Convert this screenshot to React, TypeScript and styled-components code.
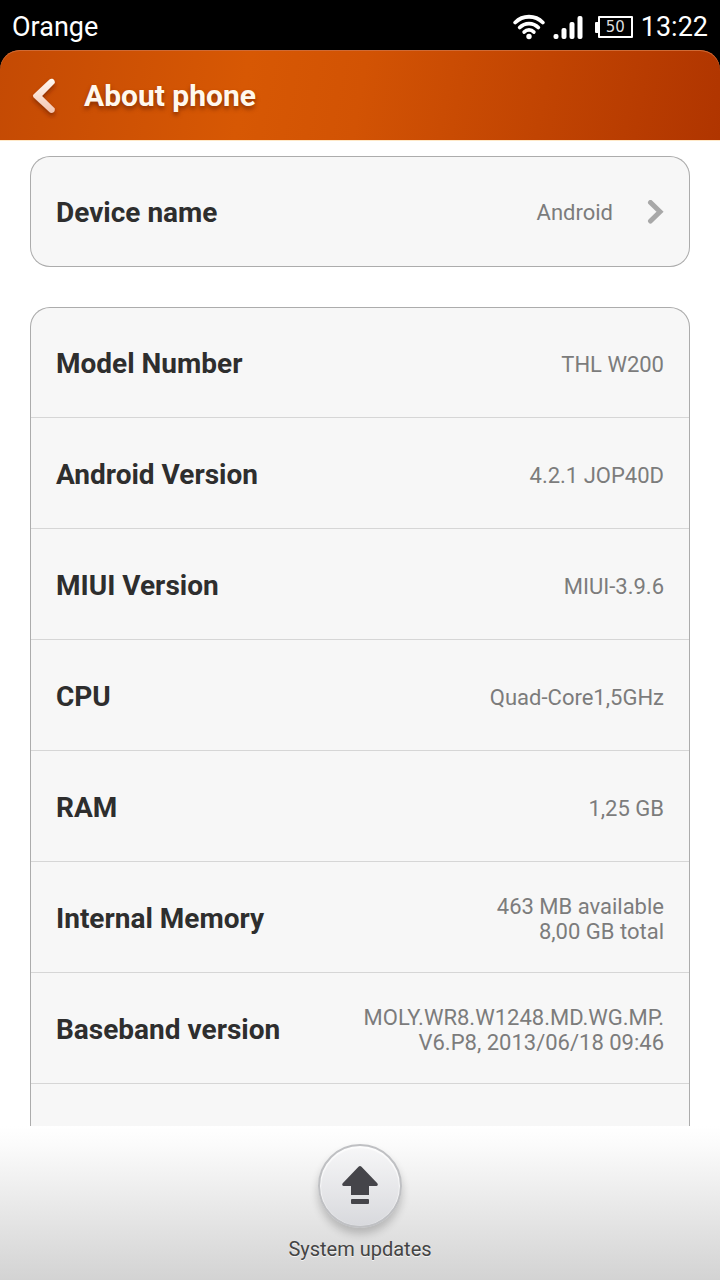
import React from "react";
import styled, { createGlobalStyle } from "styled-components";

const GlobalStyle = createGlobalStyle`
  *, *::before, *::after { box-sizing: border-box; }
  body {
    margin: 0;
    background: #000;
    font-family: Roboto, "Liberation Sans", sans-serif;
  }
`;

const Screen = styled.div`
  display: flex;
  flex-direction: column;
  height: 100vh;
  overflow: hidden;
  background: #000;
`;

const StatusBar = styled.div`
  display: flex;
  flex: none;
  align-items: center;
  justify-content: space-between;
  height: 50px;
  padding: 4px 12px 0;
  color: #fff;
  font-size: 27px;
  line-height: 32px;
`;

const StatusIcons = styled.div`
  display: flex;
  align-items: center;
  gap: 8px;

  svg { display: block; }
`;

const Header = styled.header`
  display: flex;
  flex: none;
  align-items: center;
  gap: 12px;
  height: 90px;
  padding: 2px 18px 0;
  border-radius: 20px 20px 0 0;
  background: linear-gradient(100deg, #c44a04 0%, #d75804 34%, #d25304 50%, #b03500 100%);
  box-shadow: inset 0 1px 0 #cf6a35;
`;

const BackButton = styled.button`
  display: grid;
  place-items: center;
  width: 54px;
  height: 64px;
  padding: 0;
  border: 0;
  background: none;
  cursor: pointer;
`;

const Title = styled.h1`
  margin: 0;
  color: #fff8ee;
  font-size: 30px;
  font-weight: 700;
  line-height: 36px;
  text-shadow: 0 3px 4px rgba(90, 25, 0, 0.6);
`;

const Content = styled.main`
  display: flex;
  flex: 1;
  flex-direction: column;
  gap: 40px;
  min-height: 0;
  padding: 16px 30px 0;
  overflow-y: auto;
  scrollbar-width: none;
  background: #fff;
  box-shadow: inset 0 1px 0 #ffe9c8;
`;

const Card = styled.dl`
  flex: none;
  margin: 0;
  padding: 0 1px;
  border-radius: 20px;
  background: #f7f7f7;
  box-shadow: inset 0 0 0 1px #acacac;
`;

const rowLayout = `
  display: flex;
  align-items: center;
  justify-content: space-between;
  gap: 16px;
  width: 100%;
  height: 111px;
`;

const Row = styled.div`
  ${rowLayout}
  padding: 4px 25px 0;
  border-bottom: 1px solid #d6d6d6;

  &:last-child { border-bottom: 0; }
`;

const CardButton = styled.button`
  ${rowLayout}
  flex: none;
  padding: 2px 26px 0;
  border: 0;
  border-radius: 20px;
  background: #f7f7f7;
  box-shadow: inset 0 0 0 1px #acacac;
  font-family: inherit;
  text-align: left;
  cursor: pointer;
`;

const Label = styled.span`
  color: #2e2e2e;
  font-size: 28px;
  font-weight: 700;
  line-height: 36px;
`;

const Value = styled.span`
  margin: 0;
  color: #7c7c7c;
  font-size: 22px;
  line-height: 25px;
  text-align: right;
  white-space: pre-line;
`;

const Linked = styled.span`
  display: flex;
  align-items: center;
  gap: 33px;
`;

const BottomBar = styled.footer`
  display: flex;
  flex: none;
  justify-content: center;
  height: 154px;
  padding-top: 18px;
  background: linear-gradient(#fff 0%, #fbfbfb 12%, #d3d3d3 100%);
`;

const UpdateButton = styled.button`
  display: flex;
  flex-direction: column;
  align-items: center;
  gap: 8px;
  padding: 0;
  border: 0;
  background: none;
  color: #444;
  font-family: inherit;
  font-size: 20px;
  line-height: 26px;
  text-shadow: 0 1px 0 #f4f4f4;
  cursor: pointer;
`;

const RoundIcon = styled.span`
  display: grid;
  place-items: center;
  width: 84px;
  height: 84px;
  padding-bottom: 2px;
  border: 2px solid #bfc0c3;
  border-radius: 50%;
  background: linear-gradient(#f7f7f8, #d8d9dd);
  box-shadow: inset 0 1px 1px 1px rgba(255, 255, 255, 0.7), 0 6px 8px rgba(0, 0, 0, 0.2);
`;

const details = [
  { label: "Model Number", value: "THL W200" },
  { label: "Android Version", value: "4.2.1 JOP40D" },
  { label: "MIUI Version", value: "MIUI-3.9.6" },
  { label: "CPU", value: "Quad-Core1,5GHz" },
  { label: "RAM", value: "1,25 GB" },
  { label: "Internal Memory", value: "463 MB available\n8,00 GB total" },
  { label: "Baseband version", value: "MOLY.WR8.W1248.MD.WG.MP.\nV6.P8, 2013/06/18 09:46" },
];

const WifiIcon = () => (
  <svg width="32" height="26" viewBox="0 0 32 26" fill="none" stroke="#fff" strokeWidth="3.8" strokeLinecap="round" aria-hidden="true">
    <path d="M2.200 8.500C9.800 0.800 22.200 0.800 29.800 8.500" />
    <path d="M6.700 13.500C11.800 8.200 20.200 8.200 25.300 13.500" />
    <path d="M11.200 18C13.800 15.200 18.200 15.200 20.800 18" />
    <circle cx="16" cy="22.500" r="2.700" fill="#fff" stroke="none" />
  </svg>
);

const SignalIcon = () => (
  <svg width="30" height="26" viewBox="0 0 30 26" fill="#fff" aria-hidden="true">
    <rect x="0.500" y="20" width="5" height="5" rx="2" />
    <rect x="8.500" y="14" width="5" height="11" rx="2" />
    <rect x="16.500" y="8" width="5" height="17" rx="2" />
    <rect x="24.500" y="2" width="5" height="23" rx="2" />
  </svg>
);

const Battery = styled.span`
  display: flex;
  align-items: center;
  margin-left: 4px;

  &::before {
    content: "";
    width: 3px;
    height: 11px;
    border-radius: 1px 0 0 1px;
    background: #fff;
  }
`;

const BatteryLevel = styled.span`
  display: grid;
  place-items: center;
  width: 35px;
  height: 22px;
  border: 2px solid #fff;
  border-radius: 1px;
  color: #ddd;
  font-family: "DejaVu Sans", sans-serif;
  font-size: 15px;
  line-height: 18px;
`;

export default function App() {
  return (
    <Screen>
      <GlobalStyle />
      <StatusBar>
        <span>Orange</span>
        <StatusIcons>
          <WifiIcon />
          <SignalIcon />
          <Battery>
            <BatteryLevel>50</BatteryLevel>
          </Battery>
          <span>13:22</span>
        </StatusIcons>
      </StatusBar>
      <Header>
        <BackButton type="button" aria-label="Back">
          <svg width="34" height="46" viewBox="0 0 34 46" fill="none" aria-hidden="true">
            <defs>
              <linearGradient id="backFill" x1="0" y1="5" x2="0" y2="41" gradientUnits="userSpaceOnUse">
                <stop stopColor="#fffaf4" />
                <stop offset="1" stopColor="#f3c3ae" />
              </linearGradient>
              <filter id="backShadow" x="-30%" y="-30%" width="160%" height="160%">
                <feDropShadow dx="0" dy="3" stdDeviation="2" floodColor="#6b2000" floodOpacity="0.6" />
              </filter>
            </defs>
            <path
              d="M5.500 21.600 21.500 6.500C24 4.300 27.400 6.700 26.800 10L14 22.900 26.800 35.500C27.400 39 24 41.200 21.500 39L5.500 24.200Q4.300 22.900 5.500 21.600Z"
              fill="url(#backFill)"
              filter="url(#backShadow)"
            />
          </svg>
        </BackButton>
        <Title>About phone</Title>
      </Header>
      <Content>
        <CardButton type="button">
          <Label>Device name</Label>
          <Linked>
            <Value>Android</Value>
            <svg width="18" height="26" viewBox="0 0 18 26" fill="none" stroke="#a8a8a8" strokeWidth="5" strokeLinecap="round" aria-hidden="true">
              <path d="M4.500 2.500 14 11.800 4.500 21" />
            </svg>
          </Linked>
        </CardButton>
        <Card>
          {details.map(({ label, value }) => (
            <Row key={label}>
              <Label as="dt">{label}</Label>
              <Value as="dd">{value}</Value>
            </Row>
          ))}
          <Row aria-hidden="true" />
        </Card>
      </Content>
      <BottomBar>
        <UpdateButton type="button">
          <RoundIcon>
            <svg width="36" height="40" viewBox="0 0 36 40" fill="#45454a" aria-hidden="true">
              <path d="M16.500 1.700Q18 0.300 19.500 1.700L35.300 18.200Q36.600 20.600 34.500 21H27V30H9V21H1.500Q-0.600 20.600 0.700 18.200Z" />
              <rect x="9" y="34" width="18" height="5" rx="1" />
            </svg>
          </RoundIcon>
          <span>System updates</span>
        </UpdateButton>
      </BottomBar>
    </Screen>
  );
}
